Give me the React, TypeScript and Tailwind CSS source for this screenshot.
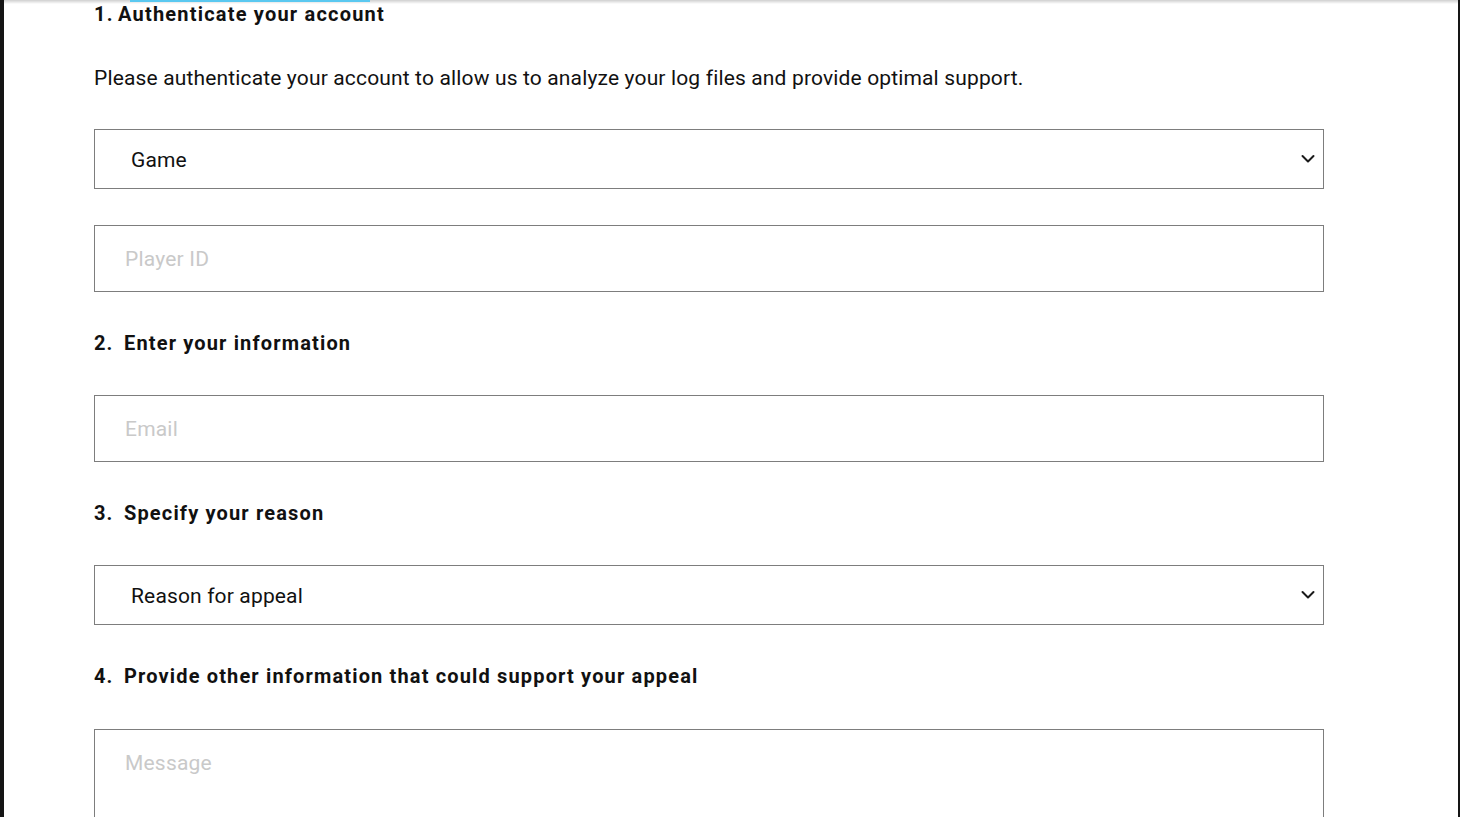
import React from "react";

function Chevron() {
  return (
    <svg width="14" height="9" viewBox="0 0 14 9" fill="none" className="absolute right-[8px] top-1/2 -translate-y-1/2">
      <path d="M1.5 1.5 L7 7 L12.5 1.5" stroke="#1a1a1a" strokeWidth="2" strokeLinecap="round" strokeLinejoin="round" />
    </svg>
  );
}

function Heading({ n, children }: { n: string; children: React.ReactNode }) {
  return (
    <h2 className="flex h-[28px] items-center text-[20px] font-bold leading-[28px] tracking-[1.15px] text-[#111]">
      <span className="w-[30px]">{n}</span>
      <span>{children}</span>
    </h2>
  );
}

function SelectBox({ label }: { label: string }) {
  return (
    <div className="relative flex h-[60px] w-[1230px] items-center border border-[#7d7d7d] bg-white pl-[36px] pt-[3px] text-[21px] tracking-[0.15px] text-[#111]">
      {label}
      <Chevron />
    </div>
  );
}

function InputBox({ placeholder }: { placeholder: string }) {
  return (
    <div className="flex h-[67px] w-[1230px] items-center border border-[#7d7d7d] bg-white pl-[30px] pt-[2px] text-[21px] tracking-[0.2px] text-[#c9c9c9]">
      {placeholder}
    </div>
  );
}

export default function App() {
  return (
    <div className="relative h-[817px] w-[1460px] overflow-hidden bg-white font-['Roboto',sans-serif]">
      <div className="absolute left-0 top-0 h-full w-[4px] bg-[#151515]" />
      <div className="absolute right-0 top-0 h-full w-[2px] bg-[#151515]" />
      <div className="absolute left-[4px] right-[2px] top-0 h-[4px] bg-gradient-to-b from-[#cfcfcf] to-transparent" />
      <div className="absolute left-[130px] top-0 h-[2px] w-[240px] bg-[#5ac8f0]" />
      <div className="flex flex-col pl-[94px]">
        <h2 className="flex h-[28px] items-center text-[20px] font-bold leading-[28px] tracking-[1.2px] text-[#111]">
          <span className="w-[24px]">1.</span>
          <span>Authenticate your account</span>
        </h2>
        <p className="mt-[36px] h-[28px] text-[21px] leading-[28px] tracking-[0.15px] text-[#111]">
          Please authenticate your account to allow us to analyze your log files and provide optimal support.
        </p>
        <div className="mt-[37px]">
          <SelectBox label="Game" />
        </div>
        <div className="mt-[36px]">
          <InputBox placeholder="Player ID" />
        </div>
        <div className="mt-[37px]">
          <Heading n="2.">Enter your information</Heading>
        </div>
        <div className="mt-[38px]">
          <InputBox placeholder="Email" />
        </div>
        <div className="mt-[37px]">
          <Heading n="3.">Specify your reason</Heading>
        </div>
        <div className="mt-[38px]">
          <SelectBox label="Reason for appeal" />
        </div>
        <div className="mt-[37px]">
          <Heading n="4.">Provide other information that could support your appeal</Heading>
        </div>
        <div className="mt-[39px] h-[160px] w-[1230px] border border-[#7d7d7d] bg-white pl-[30px] pt-[19px] text-[21px] leading-[28px] tracking-[0.2px] text-[#c9c9c9]">
          Message
        </div>
      </div>
    </div>
  );
}
